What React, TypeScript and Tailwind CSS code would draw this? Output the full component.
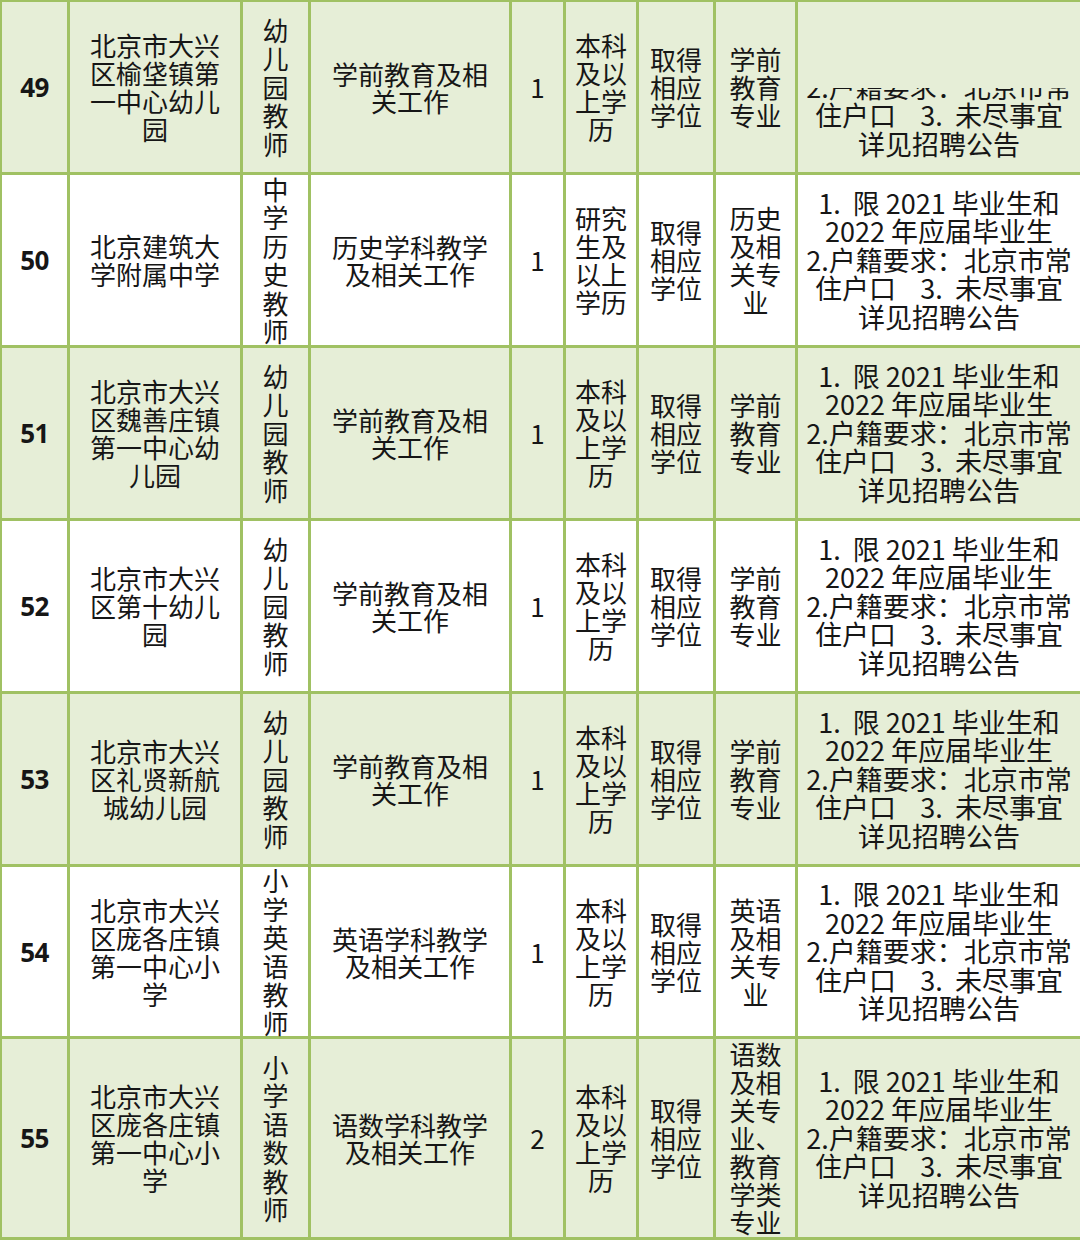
import React from "react";

type Row = {
  no: string;
  unit: string[];
  pos: string[];
  job: string[];
  count: string;
  edu: string[];
  degree: string[];
  major: string[];
  green: boolean;
  h: string;
  clipNotes?: boolean;
};

const NOTES = [
  "1.  限 2021 毕业生和",
  "2022 年应届毕业生",
  "2.户籍要求：北京市常",
  "住户口    3.  未尽事宜",
  "详见招聘公告",
];

const rows: Row[] = [
  {
    no: "49",
    unit: ["北京市大兴", "区榆垡镇第", "一中心幼儿", "园"],
    pos: ["幼", "儿", "园", "教", "师"],
    job: ["学前教育及相", "关工作"],
    count: "1",
    edu: ["本科", "及以", "上学", "历"],
    degree: ["取得", "相应", "学位"],
    major: ["学前", "教育", "专业"],
    green: true,
    h: "h-[170px]",
    clipNotes: true,
  },
  {
    no: "50",
    unit: ["北京建筑大", "学附属中学"],
    pos: ["中", "学", "历", "史", "教", "师"],
    job: ["历史学科教学", "及相关工作"],
    count: "1",
    edu: ["研究", "生及", "以上", "学历"],
    degree: ["取得", "相应", "学位"],
    major: ["历史", "及相", "关专", "业"],
    green: false,
    h: "h-[170px]",
  },
  {
    no: "51",
    unit: ["北京市大兴", "区魏善庄镇", "第一中心幼", "儿园"],
    pos: ["幼", "儿", "园", "教", "师"],
    job: ["学前教育及相", "关工作"],
    count: "1",
    edu: ["本科", "及以", "上学", "历"],
    degree: ["取得", "相应", "学位"],
    major: ["学前", "教育", "专业"],
    green: true,
    h: "h-[170px]",
  },
  {
    no: "52",
    unit: ["北京市大兴", "区第十幼儿", "园"],
    pos: ["幼", "儿", "园", "教", "师"],
    job: ["学前教育及相", "关工作"],
    count: "1",
    edu: ["本科", "及以", "上学", "历"],
    degree: ["取得", "相应", "学位"],
    major: ["学前", "教育", "专业"],
    green: false,
    h: "h-[170px]",
  },
  {
    no: "53",
    unit: ["北京市大兴", "区礼贤新航", "城幼儿园"],
    pos: ["幼", "儿", "园", "教", "师"],
    job: ["学前教育及相", "关工作"],
    count: "1",
    edu: ["本科", "及以", "上学", "历"],
    degree: ["取得", "相应", "学位"],
    major: ["学前", "教育", "专业"],
    green: true,
    h: "h-[170px]",
  },
  {
    no: "54",
    unit: ["北京市大兴", "区庞各庄镇", "第一中心小", "学"],
    pos: ["小", "学", "英", "语", "教", "师"],
    job: ["英语学科教学", "及相关工作"],
    count: "1",
    edu: ["本科", "及以", "上学", "历"],
    degree: ["取得", "相应", "学位"],
    major: ["英语", "及相", "关专", "业"],
    green: false,
    h: "h-[169px]",
  },
  {
    no: "55",
    unit: ["北京市大兴", "区庞各庄镇", "第一中心小", "学"],
    pos: ["小", "学", "语", "数", "教", "师"],
    job: ["语数学科教学", "及相关工作"],
    count: "2",
    edu: ["本科", "及以", "上学", "历"],
    degree: ["取得", "相应", "学位"],
    major: ["语数", "及相", "关专", "业、", "教育", "学类", "专业"],
    green: true,
    h: "h-[198px]",
  },
];

function Lines({ lines, lh = "leading-[28px]" }: { lines: string[]; lh?: string }) {
  return (
    <div className={`flex flex-col items-center ${lh}`}>
      {lines.map((l, i) => (
        <div key={i} className="whitespace-pre">
          {l}
        </div>
      ))}
    </div>
  );
}

function Cell({
  children,
  green,
  className = "",
}: {
  children: React.ReactNode;
  green: boolean;
  className?: string;
}) {
  return (
    <div
      className={`relative flex items-center justify-center text-center ${
        green ? "bg-[#e6eed7]" : "bg-white"
      } ${className}`}
    >
      {children}
    </div>
  );
}

export default function App() {
  return (
    <div
      className="w-[1080px] h-[1240px] overflow-hidden bg-[#a0c163] pl-[2px] pt-[2px] pb-[3px] text-[#161616] text-[26px]"
      style={{ fontFamily: '"Noto Sans CJK SC", "Noto Sans", sans-serif' }}
    >
      <div className="grid grid-cols-[65px_170px_65px_198px_51px_70px_74px_79px_1fr] gap-[3px]">
        {rows.map((r) => (
          <React.Fragment key={r.no}>
            <Cell green={r.green} className={r.h}>
              <span
                className="font-bold text-[26px] leading-none tracking-[-0.5px]"
                style={{ fontFamily: '"Noto Sans", "Open Sans", sans-serif' }}
              >
                {r.no}
              </span>
            </Cell>
            <Cell green={r.green} className={r.h}>
              <Lines lines={r.unit} />
            </Cell>
            <Cell green={r.green} className={r.h}>
              <Lines lines={r.pos} lh="leading-[28.5px]" />
            </Cell>
            <Cell green={r.green} className={r.h}>
              <Lines lines={r.job} lh="leading-[27px]" />
            </Cell>
            <Cell green={r.green} className={r.h}>
              <span className="leading-none">{r.count}</span>
            </Cell>
            <Cell green={r.green} className={r.h}>
              <Lines lines={r.edu} />
            </Cell>
            <Cell green={r.green} className={r.h}>
              <Lines lines={r.degree} />
            </Cell>
            <Cell green={r.green} className={r.h}>
              <Lines lines={r.major} />
            </Cell>
            <Cell green={r.green} className={`${r.h} overflow-hidden text-[27px]`}>
              <Lines lines={NOTES} lh="leading-[28.5px]" />
              {r.clipNotes && (
                <div className="absolute left-0 right-0 top-0 h-[86px] bg-[#e6eed7]" />
              )}
            </Cell>
          </React.Fragment>
        ))}
      </div>
    </div>
  );
}
